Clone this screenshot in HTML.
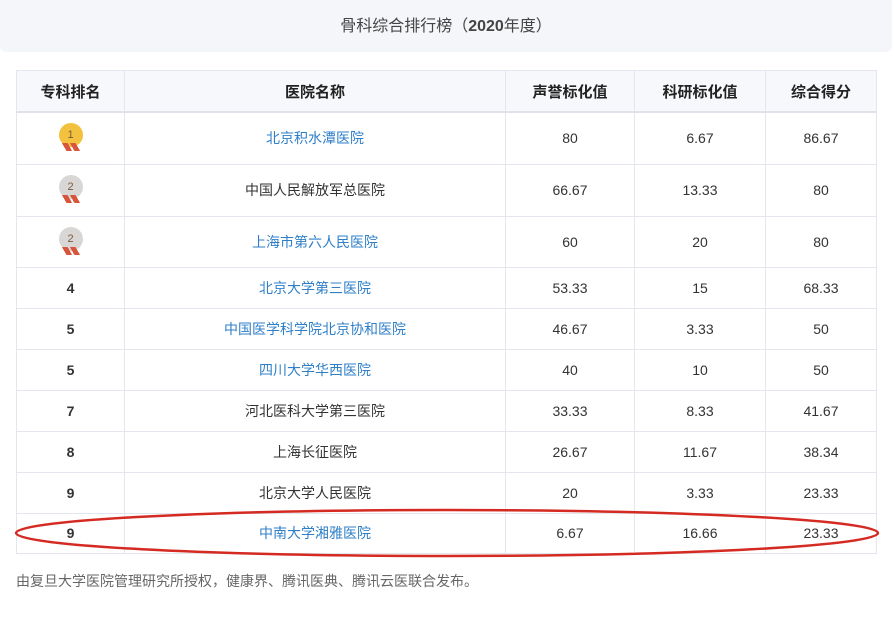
<!DOCTYPE html><html><head><meta charset="utf-8"><style>
body{margin:0;width:894px;height:624px;background:#fff;font-family:"Liberation Sans","Noto Sans CJK SC",sans-serif;position:relative;overflow:hidden}
.t{position:absolute;left:0;top:0;width:892px;height:52px;background:#f5f6f9;border-radius:0 0 6px 6px;text-align:center;line-height:54px;font-size:16px;color:#444}
table{position:absolute;left:16px;top:70px;border-collapse:collapse;font-size:14px;color:#333}
td,th{border:1px solid #e3e6ec;text-align:center;padding:0}
th{background:#f7f8fb;height:40px;font-size:15px;color:#222;border-bottom:2px solid #dfe2e8}
td.r{font-weight:bold}
a{color:#2f7fc8}
.m{display:inline-block;width:24px;height:24px;border-radius:50%;line-height:24px;font-size:11px;color:#7a5a3a;position:relative;top:-3px}
.m:after{content:"";position:absolute;left:3px;top:20px;width:18px;height:8px;background:linear-gradient(60deg,transparent 20%,#d8543a 20%,#d8543a 45%,transparent 45%,transparent 55%,#d8543a 55%,#d8543a 80%,transparent 80%)}
.g{background:#f2c23e}.s{background:#d9d6d6}
.f{position:absolute;left:16px;top:571px;font-size:14px;color:#666}
</style></head><body>
<div class="t">骨科综合排行榜（<b>2020</b>年度）</div>
<table>
<tr><th style="width:107px">专科排名</th><th style="width:380px">医院名称</th><th style="width:128px">声誉标化值</th><th style="width:130px">科研标化值</th><th style="width:110px">综合得分</th></tr>
<tr style="height:52px"><td><span class="m g">1</span></td><td><a>北京积水潭医院</a></td><td>80</td><td>6.67</td><td>86.67</td></tr>
<tr style="height:52px"><td><span class="m s">2</span></td><td>中国人民解放军总医院</td><td>66.67</td><td>13.33</td><td>80</td></tr>
<tr style="height:51px"><td><span class="m s">2</span></td><td><a>上海市第六人民医院</a></td><td>60</td><td>20</td><td>80</td></tr>
<tr style="height:41px"><td class="r">4</td><td><a>北京大学第三医院</a></td><td>53.33</td><td>15</td><td>68.33</td></tr>
<tr style="height:41px"><td class="r">5</td><td><a>中国医学科学院北京协和医院</a></td><td>46.67</td><td>3.33</td><td>50</td></tr>
<tr style="height:41px"><td class="r">5</td><td><a>四川大学华西医院</a></td><td>40</td><td>10</td><td>50</td></tr>
<tr style="height:41px"><td class="r">7</td><td>河北医科大学第三医院</td><td>33.33</td><td>8.33</td><td>41.67</td></tr>
<tr style="height:41px"><td class="r">8</td><td>上海长征医院</td><td>26.67</td><td>11.67</td><td>38.34</td></tr>
<tr style="height:41px"><td class="r">9</td><td>北京大学人民医院</td><td>20</td><td>3.33</td><td>23.33</td></tr>
<tr style="height:40px"><td class="r">9</td><td><a>中南大学湘雅医院</a></td><td>6.67</td><td>16.66</td><td>23.33</td></tr>
</table>
<svg style="position:absolute;left:0;top:0" width="894" height="624"><ellipse cx="447" cy="533" rx="431" ry="23" fill="none" stroke="#d42a22" stroke-width="2.5"/></svg>
<div class="f">由复旦大学医院管理研究所授权，健康界、腾讯医典、腾讯云医联合发布。</div>
</body></html>
